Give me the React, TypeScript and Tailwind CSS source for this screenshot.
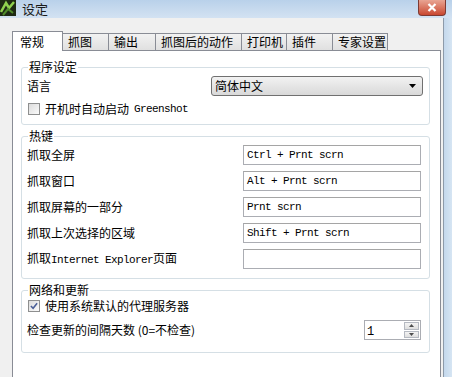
import React from "react";

const cjk = "font-['Noto_Sans_CJK_SC','Noto_Sans',sans-serif]";
const mono = "font-['Liberation_Mono','Noto_Sans_CJK_SC',monospace] text-[11px] tracking-[-0.6px]";

const tabs = ["常规", "抓图", "输出", "抓图后的动作", "打印机", "插件", "专家设置"];
const tabWidths = ["w-[51px]", "w-[47px]", "w-[48px]", "w-[87px]", "w-[46px]", "w-[47px]", "w-[56px]"];

const hotkeys = [
  { label: "抓取全屏", value: "Ctrl + Prnt scrn" },
  { label: "抓取窗口", value: "Alt + Prnt scrn" },
  { label: "抓取屏幕的一部分", value: "Prnt scrn" },
  { label: "抓取上次选择的区域", value: "Shift + Prnt scrn" },
  { label: "ie", value: "" },
];

function AppIcon() {
  return (
    <svg width="16" height="16" viewBox="0 0 16 16">
      <rect width="16" height="16" fill="#1e2a14" />
      <path d="M1 12 L6 3 L9 8 L14 2" stroke="#8fd14f" strokeWidth="2.5" fill="none" />
      <path d="M3 15 L8 9 L13 13" stroke="#4f8a2a" strokeWidth="2" fill="none" />
    </svg>
  );
}

function Checkbox({ checked }: { checked?: boolean }) {
  return (
    <span className="flex h-[12px] w-[12px] items-center justify-center border border-[#8e8f8f] bg-gradient-to-br from-[#dcdcdc] to-[#fbfbfb]">
      {checked && (
        <svg width="8" height="8" viewBox="0 0 9 9">
          <path d="M1 4.5 L3.5 7 L8 1.5" stroke="#4a5f97" strokeWidth="1.8" fill="none" />
        </svg>
      )}
    </span>
  );
}

function Group({ title, className, children }: { title: string; className?: string; children: React.ReactNode }) {
  return (
    <fieldset className={`ml-[8px] mr-[10px] rounded-[3px] border border-[#d5dfe5] px-[5px] ${className ?? ""}`}>
      <legend className="ml-[1px] px-[1px] text-[12px] leading-[12px] text-black">{title}</legend>
      {children}
    </fieldset>
  );
}

export default function App() {
  return (
    <div className={`flex h-[377px] w-[452px] flex-col overflow-hidden bg-[#f0f0f0] ${cjk} text-[12px] text-black`}>
      {/* title bar */}
      <div className="flex h-[18px] items-start bg-gradient-to-b from-[#b9d1ea] to-[#d3e2f2]">
        <AppIcon />
        <span className="ml-[6px] self-center text-[13px] leading-[16px] text-[#1a1a1a]">设定</span>
        <div className="ml-auto mr-[6px] flex h-[16px] w-[28px] items-center justify-center rounded-b-[4px] border border-t-0 border-[#7d3a33] bg-gradient-to-b from-[#e8a493] to-[#c8462f]">
          <svg width="10" height="9" viewBox="0 0 10 9">
            <path d="M1.5 1 L8.5 8 M8.5 1 L1.5 8" stroke="white" strokeWidth="2.2" />
          </svg>
        </div>
      </div>

      <div className="flex flex-1">
        <div className="flex flex-1 flex-col pl-[12px] pt-[13px]">
          {/* tabs */}
          <div className="flex h-[19px] items-end">
            {tabs.map((t, i) =>
              i === 0 ? (
                <div
                  key={t}
                  className={`${tabWidths[i]} relative z-10 mb-[-1px] flex h-[20px] items-center border border-b-0 border-[#898c95] bg-white pl-[7px] leading-[12px]`}
                >
                  {t}
                </div>
              ) : (
                <div
                  key={t}
                  className={`${tabWidths[i]} ml-[-1px] flex h-[17px] items-center border border-b-0 border-[#898c95] bg-gradient-to-b from-[#f2f2f2] to-[#e0e0e0] pl-[5px] leading-[12px]`}
                >
                  {t}
                </div>
              )
            )}
          </div>

          {/* panel */}
          <div className="flex w-[429px] flex-1 flex-col border border-b-0 border-[#898c95] bg-white pt-[10px]">
            <Group title="程序设定" className="pb-[5px]">
              <div className="mt-[3px] flex h-[20px] items-center">
                <span>语言</span>
                <div className="ml-auto mr-[1px] flex h-[20px] w-[212px] items-center rounded-[3px] border border-[#707070] bg-gradient-to-b from-[#f2f2f2] to-[#d9d9d9] pl-[3px]">
                  <span>简体中文</span>
                  <svg className="ml-auto mr-[6px]" width="7" height="4" viewBox="0 0 7 4">
                    <path d="M0 0 H7 L3.5 4 Z" fill="#000" />
                  </svg>
                </div>
              </div>
              <div className="mt-[3px] flex h-[20px] items-center pl-[1px]">
                <Checkbox />
                <span className="ml-[5px]">开机时自动启动</span>
                <span className={`ml-[5px] ${mono}`}>Greenshot</span>
              </div>
            </Group>

            <Group title="热键" className="mt-[5px] pb-[9px]">
              <div className="mt-[3px] flex flex-col gap-[6px]">
                {hotkeys.map((h) => (
                  <div key={h.label} className="flex h-[20px] items-center">
                    <span>
                      {h.label === "ie" ? (
                        <>
                          抓取<span className={mono}>Internet Explorer</span>页面
                        </>
                      ) : (
                        h.label
                      )}
                    </span>
                    <div className={`ml-auto mr-[3px] flex h-[20px] w-[178px] items-center border border-[#abadb3] border-t-[#a5a5a5] bg-white pl-[3px] ${mono}`}>
                      {h.value}
                    </div>
                  </div>
                ))}
              </div>
            </Group>

            <Group title="网络和更新" className="mt-[5px] pb-[12px]">
              <div className="mt-[1px] flex h-[18px] items-center pl-[1px]">
                <Checkbox checked />
                <span className="ml-[5px]">使用系统默认的代理服务器</span>
              </div>
              <div className="mt-[5px] flex h-[20px] items-center">
                <span>检查更新的间隔天数 (0=不检查)</span>
                <div className="ml-auto mr-[3px] flex h-[20px] w-[57px] border border-[#abadb3] bg-white">
                  <span className={`flex-1 pl-[2px] pt-[2px] ${mono} text-[12px]`}>1</span>
                  <div className="m-[1px] flex w-[15px] flex-col gap-[1px]">
                    <div className="flex flex-1 items-center justify-center border border-[#b5b9c1] bg-gradient-to-b from-[#f4f4f4] to-[#dedede]">
                      <svg width="5" height="3" viewBox="0 0 5 3"><path d="M0 3 L2.5 0 L5 3 Z" fill="#4d4d4d" /></svg>
                    </div>
                    <div className="flex flex-1 items-center justify-center border border-[#b5b9c1] bg-gradient-to-b from-[#f4f4f4] to-[#dedede]">
                      <svg width="5" height="3" viewBox="0 0 5 3"><path d="M0 0 L2.5 3 L5 0 Z" fill="#4d4d4d" /></svg>
                    </div>
                  </div>
                </div>
              </div>
            </Group>
          </div>
        </div>
        {/* window frame */}
        <div className="w-[9px] border-l border-[#8d9aa9] bg-gradient-to-r from-[#c4d8ec] to-[#d6e5f3]" />
      </div>
    </div>
  );
}
